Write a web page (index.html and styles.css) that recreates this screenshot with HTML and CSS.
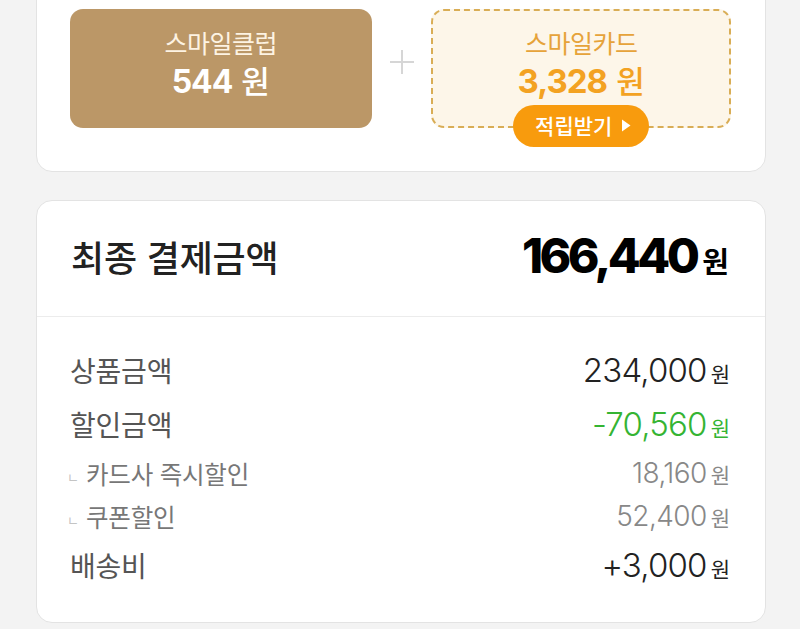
FILE: index.html
```html
<!DOCTYPE html>
<html lang="ko">
<head>
<meta charset="utf-8">
<link rel="stylesheet" href="styles.css">
</head>
<body>
<div class="page">
  <section class="card reward-card">
    <div class="rewards">
      <div class="reward reward-club">
        <div class="reward-title">스마일클럽</div>
        <div class="reward-amount"><span class="num">544</span> <span class="won">원</span></div>
      </div>
      <div class="plus" aria-hidden="true">
        <svg width="24" height="24" viewBox="0 0 24 24"><path d="M12 0v24M0 12h24" stroke="#d6d6d6" stroke-width="2"/></svg>
      </div>
      <div class="reward reward-card-box">
        <div class="reward-title">스마일카드</div>
        <div class="reward-amount"><span class="num">3,328</span> <span class="won">원</span></div>
        <button class="earn-btn">적립받기 <svg width="10" height="13" viewBox="0 0 10 13"><path d="M1 0.5L9.5 6.5L1 12.5Z" fill="#fff"/></svg></button>
      </div>
    </div>
  </section>

  <section class="card total-card">
    <div class="total-head">
      <div class="total-label">최종 결제금액</div>
      <div class="total-value"><span class="num">166,440</span><span class="won">원</span></div>
    </div>
    <div class="rows">
      <div class="row main">
        <span class="label">상품금액</span>
        <span class="value"><span class="num">234,000</span><span class="won">원</span></span>
      </div>
      <div class="row main">
        <span class="label">할인금액</span>
        <span class="value green"><span class="num">-70,560</span><span class="won">원</span></span>
      </div>
      <div class="row sub">
        <span class="label"><span class="mark">ㄴ</span>카드사 즉시할인</span>
        <span class="value"><span class="num">18,160</span><span class="won">원</span></span>
      </div>
      <div class="row sub sub2">
        <span class="label"><span class="mark">ㄴ</span>쿠폰할인</span>
        <span class="value"><span class="num">52,400</span><span class="won">원</span></span>
      </div>
      <div class="row main last">
        <span class="label">배송비</span>
        <span class="value"><span class="num">+3,000</span><span class="won">원</span></span>
      </div>
    </div>
  </section>
</div>
</body>
</html>
```

FILE: styles.css
```css
* { box-sizing: border-box; }
html, body { margin: 0; padding: 0; }
body {
  background: #f3f3f3;
  font-family: "Noto Sans CJK KR", "Noto Sans", sans-serif;
  color: #222;
  height: 629px;
  overflow: hidden;
}
.page {
  padding: 0 34px 0 36px;
}
.card {
  background: #fff;
  border: 1px solid #e3e3e3;
  border-radius: 16px;
}
.reward-card {
  margin-top: -40px;
  padding: 48px 34px 43px 33px;
}
.rewards {
  display: flex;
  align-items: center;
}
.reward {
  width: 302px;
  height: 119px;
  border-radius: 13px;
  display: flex;
  flex-direction: column;
  align-items: center;
  padding-top: 16px;
  position: relative;
}
.reward-club {
  background: #bb9767;
  color: #fff;
}
.reward-club .reward-title { color: #fdf3e3; }
.reward-card-box {
  width: 300px;
  background: #fdf6e9;
  border: 2px dashed #d9ad55;
  padding-top: 14px;
}
.reward-card-box .reward-title { color: #e6a33a; }
.reward-card-box .reward-amount { color: #f3a222; }
.reward-title {
  font-size: 25px;
  line-height: 35px;
  letter-spacing: -0.5px;
}
.reward-amount {
  font-size: 32px;
  line-height: 38px;
  white-space: nowrap;
}
.reward-amount .num {
  font-family: Inter, Roboto, sans-serif;
  font-weight: 700;
  letter-spacing: -1px;
}
.reward-amount .won {
  font-size: 31px;
  font-weight: 500;
}
.reward-card-box .reward-amount { font-size: 33px; }
.plus {
  width: 60px;
  display: flex;
  justify-content: center;
  align-items: center;
  margin-top: -14px;
}
.plus svg { display: block; }
.earn-btn {
  position: absolute;
  left: 50%;
  bottom: -21px;
  transform: translateX(-50%);
  width: 136px;
  height: 42px;
  border: 0;
  border-radius: 21px;
  background: #f89b0d;
  color: #fff;
  font-family: "Noto Sans CJK KR", sans-serif;
  font-size: 21px;
  font-weight: 500;
  display: flex;
  align-items: center;
  justify-content: center;
  gap: 9px;
  padding: 0 0 2px 4px;
}
.total-card {
  margin-top: 28px;
  height: 423px;
}
.total-head {
  height: 116px;
  display: flex;
  justify-content: space-between;
  align-items: center;
  padding: 0 36px 6px 34px;
  border-bottom: 1px solid #ececec;
}
.total-label {
  font-size: 36px;
  font-weight: 500;
  color: #222;
  letter-spacing: -0.2px;
}
.total-value {
  display: flex;
  align-items: baseline;
  color: #000;
}
.total-value .num {
  font-family: Inter, Roboto, sans-serif;
  font-size: 48px;
  font-weight: 800;
  letter-spacing: -3.6px;
}
.total-value .won {
  font-size: 29px;
  font-weight: 700;
  margin-left: 6px;
}
.rows {
  padding: 26px 35px 0 33px;
}
.row {
  display: flex;
  justify-content: space-between;
  align-items: center;
}
.row.main { height: 54px; }
.row.sub { height: 44px; }
.row.sub2 { height: 42px; }
.row.last { height: 54px; padding-top: 2px; }
.label {
  color: #555;
  font-size: 28px;
  letter-spacing: -0.2px;
  display: flex;
  align-items: center;
}
.row.sub .label {
  color: #777;
  font-size: 24.5px;
}
.mark {
  color: #c4c4c4;
  font-size: 13px;
  width: 19px;
  margin-left: -3px;
  margin-top: 6px;
}
.value {
  display: flex;
  align-items: baseline;
  color: #222;
}
.value .num {
  font-family: Inter, Roboto, sans-serif;
  font-size: 33px;
  font-weight: 300;
  letter-spacing: -0.8px;
}
.value .won {
  font-size: 21px;
  margin-left: 4px;
}
.value.green { color: #35b433; }
.row.sub .value { color: #888; }
.row.sub .value .num { font-size: 28px; letter-spacing: -0.6px; }
.row.sub .value .won { font-size: 21px; margin-left: 4px; }
```
